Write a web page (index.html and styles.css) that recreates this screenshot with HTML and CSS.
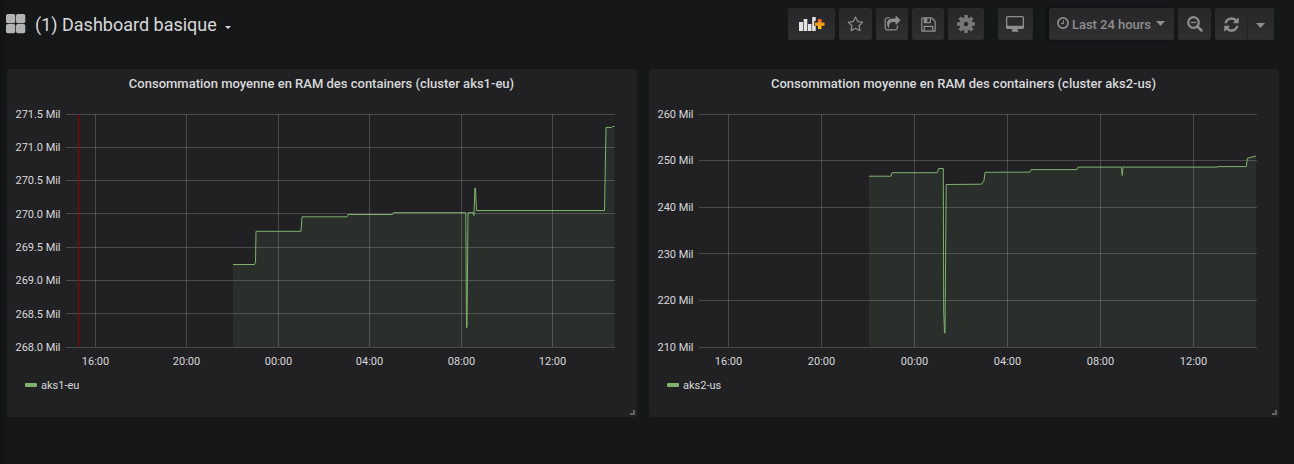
FILE: index.html
```html
<!DOCTYPE html>
<html lang="fr">
<head>
<meta charset="utf-8">
<title>Dashboard basique</title>
<link rel="stylesheet" href="styles.css">
</head>
<body>
<header class="navbar">
  <div class="title">
    <svg class="title-icon" width="20" height="20" viewBox="0 0 20 20"><rect x="0" y="0" width="9.3" height="9.3" rx="1.8"/><rect x="10" y="0" width="9.3" height="9.3" rx="1.8"/><rect x="0" y="10" width="9.3" height="9.3" rx="1.8"/><rect x="10" y="10" width="9.3" height="9.3" rx="1.8"/></svg>
    <h1>(1) Dashboard basique</h1>
    <svg class="title-caret" width="6" height="3" viewBox="0 0 6 3"><path d="M0 0h6L3 3z"/></svg>
  </div>
  <nav class="actions">
    <button class="btn add">
      <svg width="26" height="16" viewBox="0 0 26 16">
        <defs><linearGradient id="plus" x1="0" y1="0" x2="0" y2="1"><stop offset="0" stop-color="#f05a28"/><stop offset=".5" stop-color="#f99b1c"/><stop offset="1" stop-color="#fbca0a"/></linearGradient></defs>
        <path fill="#e3e3e3" d="M0 6h4v9H0zM4.700 3h3.600v12H4.700zM9 8h3.500v7H9zM13.200 1h3.500v4h-1.500v5h1.500v5h-3.500z"/>
        <path fill="url(#plus)" d="M19 3h3.500v3.500H25.500v3.200h-3V13H19V9.700h-3V6.500h3z"/>
      </svg>
    </button>
    <button class="btn star"><svg width="17" height="17" viewBox="0 0 1792 1792"><path d="M1201 1004l306-297-422-62-189-382-189 382-422 62 306 297-73 421 378-199 377 199zm527-357q0 22-26 48l-363 354 86 500q1 7 1 20 0 50-41 50-19 0-40-12l-449-236-449 236q-22 12-40 12-21 0-31.500-14.500t-10.500-35.500q0-6 2-20l86-500-364-354q-25-27-25-48 0-37 56-46l502-73 225-455q19-41 49-41t49 41l225 455 502 73q56 9 56 46z"/></svg></button>
    <button class="btn share"><svg width="17" height="17" viewBox="0 0 1792 1792"><path d="M1472 989v259q0 119-84.500 203.500t-203.500 84.500h-832q-119 0-203.500-84.500t-84.500-203.500v-832q0-119 84.500-203.500t203.500-84.500h255q13 0 22.500 9.500t9.500 22.500q0 27-26 32-77 26-133 60-10 4-16 4h-112q-66 0-113 47t-47 113v832q0 66 47 113t113 47h832q66 0 113-47t47-113v-214q0-19 18-29 28-13 54-37 16-16 35-8 21 9 21 29zm237-496l-384 384q-18 19-45 19-12 0-25-5-39-17-39-59v-192h-160q-323 0-438 131-119 137-74 473 3 23-20 34-8 2-12 2-16 0-26-13-10-14-21-31t-39.500-68.500-49.500-99.500-38.500-114-17.500-122q0-49 3.500-91t14-90 28-88 47-81.500 68.500-74 94.500-61.500 124.500-48.500 159.500-30.500 196.500-11h160v-192q0-42 39-59 13-5 25-5 26 0 45 19l384 384q19 19 19 45t-19 45z"/></svg></button>
    <button class="btn save"><svg width="17" height="17" viewBox="0 0 1792 1792"><path d="M512 1536h768v-384h-768v384zm896 0h128v-896q0-14-10-38.500t-20-34.500l-281-281q-10-10-34-20t-39-10v416q0 40-28 68t-68 28h-576q-40 0-68-28t-28-68v-416h-128v1280h128v-416q0-40 28-68t68-28h832q40 0 68 28t28 68v416zm-384-928v-320q0-13-9.500-22.500t-22.500-9.500h-192q-13 0-22.500 9.500t-9.500 22.500v320q0 13 9.500 22.500t22.500 9.500h192q13 0 22.500-9.500t9.500-22.500zm640 32v928q0 40-28 68t-68 28h-1344q-40 0-68-28t-28-68v-1344q0-40 28-68t68-28h928q40 0 88 20t76 48l280 280q28 28 48 76t20 88z"/></svg></button>
    <button class="btn gear">
      <svg width="18" height="18" viewBox="-9 -9 18 18">
        <path d="M-2-6L-1.600-9h3.200L2-6v12l-.4 3h-3.200L-2 6z"/><path transform="rotate(45)" d="M-2-6L-1.600-9h3.200L2-6v12l-.4 3h-3.200L-2 6z"/><path transform="rotate(90)" d="M-2-6L-1.600-9h3.200L2-6v12l-.4 3h-3.200L-2 6z"/><path transform="rotate(135)" d="M-2-6L-1.600-9h3.200L2-6v12l-.4 3h-3.200L-2 6z"/>
        <circle r="6.500"/><circle class="hole" r="2.200"/>
      </svg>
    </button>
    <button class="btn tv"><svg width="18" height="16" viewBox="0 0 18 16"><path fill-rule="evenodd" d="M1.500 0h15A1.500 1.500 0 0 1 18 1.500v10a1.500 1.500 0 0 1-1.500 1.500h-5l.7 2v.7H5.800V15l.7-2h-5A1.500 1.500 0 0 1 0 11.500v-10A1.500 1.500 0 0 1 1.500 0zM1.300 1.300v8.500h15.400V1.300z"/></svg></button>
    <button class="btn time">
      <svg class="clock" width="12" height="12" viewBox="0 0 12 12"><circle cx="6" cy="6" r="5.100" fill="none" stroke="currentColor" stroke-width="1.700"/><path d="M5.900 3h1v4H4V6h1.900z"/></svg>
      <span>Last 24 hours</span>
      <svg class="caret" width="9" height="5" viewBox="0 0 9 5"><path d="M0 0h9L4.500 5z"/></svg>
    </button>
    <button class="btn zoom"><svg width="16" height="16" viewBox="0 0 16 16"><circle cx="6.500" cy="6.500" r="5.300" fill="none" stroke="currentColor" stroke-width="2.200"/><path d="M10.300 10.300l4.200 4.200" stroke="currentColor" stroke-width="2.500" stroke-linecap="round"/><path d="M3.700 5.800h5.600v1.300H3.700z"/></svg></button>
    <div class="refresh-group">
      <button class="btn refresh"><svg width="17" height="17" viewBox="0 0 1792 1792"><path d="M1639 1056q0 5-1 7-64 268-268 434.500t-478 166.500q-146 0-282.500-55t-243.500-157l-129 129q-19 19-45 19t-45-19-19-45v-448q0-26 19-45t45-19h448q26 0 45 19t19 45-19 45l-137 137q71 66 161 102t187 36q134 0 250-65t186-179q11-17 53-117 8-23 30-23h192q13 0 22.500 9.500t9.500 22.500zm25-800v448q0 26-19 45t-45 19h-448q-26 0-45-19t-19-45 19-45l138-138q-148-137-349-137-134 0-250 65t-186 179q-11 17-53 117-8 23-30 23h-199q-13 0-22.500-9.500t-9.500-22.500v-7q65-268 270-434.500t480-166.500q146 0 284 55.500t245 156.500l130-129q19-19 45-19t45 19 19 45z"/></svg></button>
      <button class="btn interval"><svg width="9" height="5" viewBox="0 0 9 5"><path d="M0 0h9L4.500 5z"/></svg></button>
    </div>
  </nav>
</header>
<main class="panels">
  <section class="panel">
    <h2>Consommation moyenne en RAM des containers (cluster aks1-eu)</h2>
    <svg class="chart" width="630" height="278" viewBox="7 98 630 278">
      <path class="area" d="M233 347V264.500H255L256 231.500H301L302 217H347L348 214.500H393L394 212.500H466L467 327.500L468 212.500H473L474 215L475 188L476.500 210.500H605L606 127.500H611L612 126.500H614.500V347z"/>
      <path class="grid" d="M66 114.500H615M66 147.500H615M66 180.500H615M66 213.500H615M66 247.500H615M66 280.500H615M66 313.500H615M66 347.500H615M95.500 114V347M186.500 114V347M278.500 114V347M369.500 114V347M461.500 114V347M552.500 114V347"/>
      <path class="marker" d="M78.500 114V347"/>
      <path class="series" d="M233 264.500H254.500L255.500 262L256 231.300H301L302 216.800H347L348 214.500H392.500L393.500 212.700H465.800L466.500 327.500H467L468 212.700H473.300L473.900 215.500L474.900 188H475.500L476.500 210.500H604.500L606 127.400H611.500L612.500 126.500H614.500"/>
      <g class="labels y">
        <text x="60.500" y="118">271.5 Mil</text><text x="60.500" y="151">271.0 Mil</text><text x="60.500" y="184">270.5 Mil</text><text x="60.500" y="218">270.0 Mil</text><text x="60.500" y="251">269.5 Mil</text><text x="60.500" y="284">269.0 Mil</text><text x="60.500" y="318">268.5 Mil</text><text x="60.500" y="351">268.0 Mil</text>
      </g>
      <g class="labels x">
        <text x="95.500" y="365">16:00</text><text x="186.500" y="365">20:00</text><text x="278.500" y="365">00:00</text><text x="369.500" y="365">04:00</text><text x="461.500" y="365">08:00</text><text x="552.500" y="365">12:00</text>
      </g>
    </svg>
    <div class="legend"><i></i><span>aks1-eu</span></div>
    <span class="resize"></span>
  </section>
  <section class="panel">
    <h2>Consommation moyenne en RAM des containers (cluster aks2-us)</h2>
    <svg class="chart" width="630" height="278" viewBox="649 98 630 278">
      <path class="area" d="M869 347V176H891L892 172.700H938L939 168.500H943.500L944.500 333L946 184.500H982L985 172.300H1031L1032 169.500H1077L1078 167H1122L1123 175L1124 167H1247V158L1256 156V347z"/>
      <path class="grid" d="M699 114.500H1257M699 160.500H1257M699 207.500H1257M699 253.500H1257M699 300.500H1257M699 347.500H1257M728.500 114V347M821.500 114V347M914.500 114V347M1007.500 114V347M1100.500 114V347M1193.500 114V347"/>
      <path class="series" d="M869 176.200H891L892 172.700H937.500L938.500 168.500H943.300L943.700 310L944.500 333H945L946.200 184.500L981.500 184.200L984 180.500L985 172.300L1030 172.100L1031 169.600H1077L1078 167.100H1121.500L1122.200 175.500L1123.200 166.500L1125 167.100H1217L1218 166.600H1246.300L1247.300 158.300L1256 156"/>
      <g class="labels y">
        <text x="693.500" y="118">260 Mil</text><text x="693.500" y="164">250 Mil</text><text x="693.500" y="211">240 Mil</text><text x="693.500" y="258">230 Mil</text><text x="693.500" y="304">220 Mil</text><text x="693.500" y="351">210 Mil</text>
      </g>
      <g class="labels x">
        <text x="728.500" y="365">16:00</text><text x="821.500" y="365">20:00</text><text x="914.500" y="365">00:00</text><text x="1007.500" y="365">04:00</text><text x="1100.500" y="365">08:00</text><text x="1193.500" y="365">12:00</text>
      </g>
    </svg>
    <div class="legend"><i></i><span>aks2-us</span></div>
    <span class="resize"></span>
  </section>
</main>
</body>
</html>
```
FILE: styles.css
```css
* { box-sizing: border-box; }
body {
  margin: 0;
  height: 464px;
  overflow: hidden;
  background: linear-gradient(90deg, #111214 0, #161719 9px);
  color: #d8d9da;
  font-family: Roboto, "Liberation Sans", sans-serif;
}
h1, h2 { margin: 0; }
svg { display: block; flex: none; fill: currentColor; }
.navbar {
  height: 69px;
  padding: 8px 20px 0 6px;
  display: flex;
  justify-content: space-between;
  align-items: flex-start;
}
.title { display: flex; align-items: center; height: 34px; }
.title-icon { color: #b3b3b3; margin-top: -3px; }
.title h1 { margin-left: 9px; font-size: 18px; font-weight: 400; line-height: 32px; white-space: nowrap; }
.title-caret { margin: 4px 0 0 8px; }
.actions { display: flex; }
.btn {
  height: 32px;
  padding: 0;
  margin: 0 0 0 4px;
  border: 1px solid #2b2b2d;
  border-radius: 2px;
  background: linear-gradient(#262628, #303032);
  color: #8e8e8e;
  display: flex;
  align-items: center;
  justify-content: center;
  font-family: inherit;
}
.add { width: 47px; }
.star { width: 33px; }
.star svg { margin-right: 1px; }
.share, .save { width: 32px; }
.share svg { margin-top: 1px; }
.gear { width: 36px; color: #777; }
.hole { fill: #2b2b2d; }
.tv { width: 35px; margin-left: 14px; }
.tv svg { margin-right: 1px; }
.time {
  width: 125px;
  margin-left: 16px;
  padding-right: 1px;
  font-size: 13px;
  font-weight: 500;
  box-shadow: -3px 0 2px #101113;
}
.clock { margin: -3px 3px 0 0; }
.time span { letter-spacing: -0.03px; }
.caret { margin: -2px 0 0 5px; }
.zoom { width: 33px; }
.refresh-group { display: flex; margin-left: 4px; }
.refresh { width: 32px; margin: 0; border-radius: 2px 0 0 2px; }
.interval { width: 27px; margin: 0; border-left-color: #242426; border-radius: 0 2px 2px 0; }
.interval svg { margin-top: 2px; }
.panels { display: flex; gap: 12px; padding-left: 7px; }
.panel {
  position: relative;
  width: 630px;
  height: 348px;
  background: #212124;
  border-radius: 2px;
}
.panel h2 {
  height: 29px;
  padding-right: 1px;
  font-size: 13px;
  font-weight: 500;
  line-height: 29px;
  text-align: center;
}
.area { fill: #7eb26d; fill-opacity: .1; }
.grid { fill: none; stroke: #c8c8c8; stroke-opacity: .25; stroke-width: 1; }
.marker { stroke: #8d0508; }
.series { fill: none; stroke: #7eb26d; stroke-width: 1; }
.labels { font-size: 11px; fill: #d8d9da; }
.y { text-anchor: end; letter-spacing: -0.04px; }
.x { text-anchor: middle; }
.legend {
  display: flex;
  align-items: center;
  height: 18px;
  padding-left: 18px;
  font-size: 11px;
}
.legend i { width: 12px; height: 4px; margin-right: 4px; border-radius: 1px; background: #7eb26d; }
.resize {
  position: absolute;
  right: 2px;
  bottom: 2px;
  width: 5px;
  height: 5px;
  border: solid #626264;
  border-width: 0 2px 2px 0;
}
```
